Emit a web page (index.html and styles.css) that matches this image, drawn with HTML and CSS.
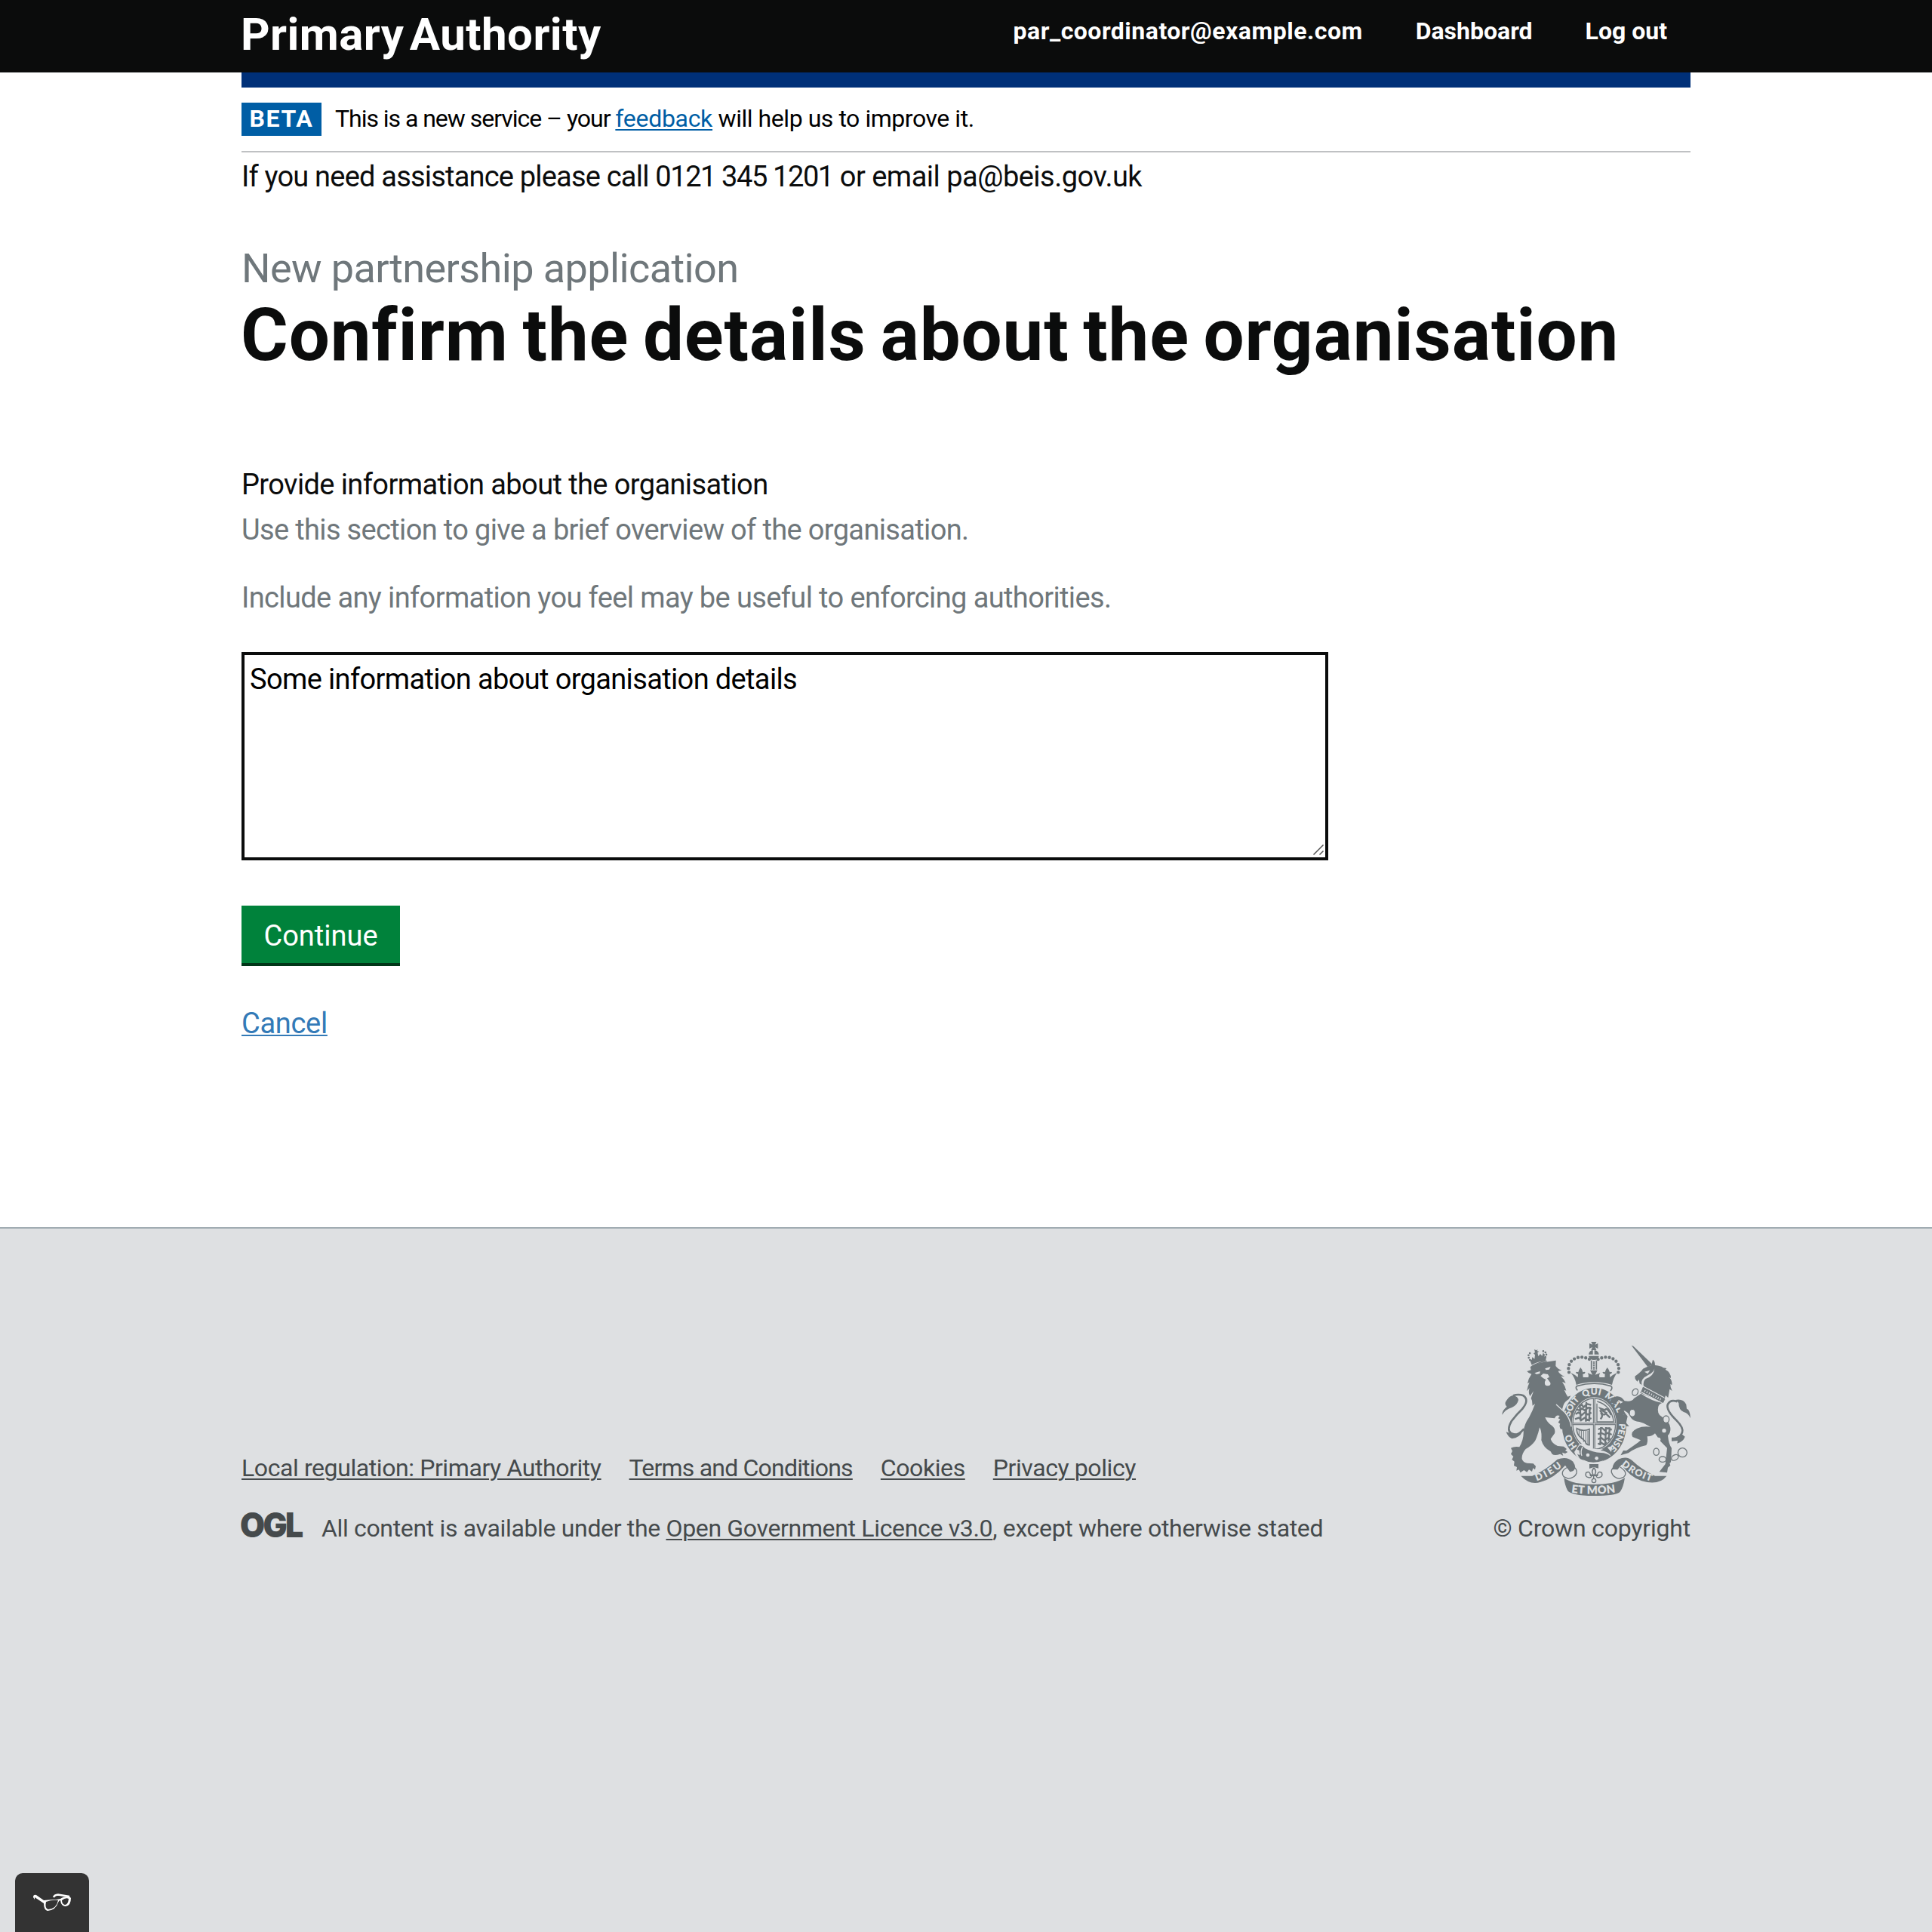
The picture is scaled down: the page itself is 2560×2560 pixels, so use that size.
FILE: index.html
```html
<!DOCTYPE html>
<html lang="en">
<head>
<meta charset="utf-8">
<title>Confirm the details about the organisation</title>
<link rel="stylesheet" href="styles.css">
</head>
<body>
<header class="site-header">
  <div class="wrap site-header-inner">
    <a class="site-name" href="#">Primary Authority</a>
    <nav class="user-nav">
      <a class="user-email" href="#">par_coordinator@example.com</a>
      <a href="#">Dashboard</a>
      <a href="#">Log out</a>
    </nav>
  </div>
</header>
<div class="wrap header-bar"></div>
<main class="wrap main">
  <div class="phase-banner">
    <strong class="phase-tag">BETA</strong>
    <span class="phase-text">This is a new service – your <a href="#">feedback</a><span class="phase-end"> will help us to improve it.</span></span>
  </div>
  <p class="assistance">If you need assistance please call <span class="phone">0121 345 1201</span><span class="email"> or email pa@beis.gov.uk</span></p>
  <p class="caption">New partnership application</p>
  <h1 class="heading">Confirm the details about the organisation</h1>
  <form class="form">
    <label class="label" for="about">Provide information about the organisation</label>
    <p class="hint hint-first">Use this section to give a brief overview of the organisation.</p>
    <p class="hint hint-second">Include any information you feel may be useful to enforcing authorities.</p>
    <div class="field">
      <textarea class="textarea" id="about">Some information about organisation details</textarea>
      <svg class="grip" viewBox="0 0 16 16"><path d="M1.5 14.5 14.5 1.5M9.5 14.5 14.5 9.5" stroke="#555" stroke-width="1.5" fill="none"/></svg>
    </div>
    <button class="button" type="button">Continue</button>
    <a class="cancel" href="#">Cancel</a>
  </form>
</main>
<footer class="footer">
  <div class="wrap footer-inner">
    <div class="footer-meta">
      <nav class="footer-links">
        <a href="#">Local regulation: Primary Authority</a>
        <a class="terms" href="#">Terms and Conditions</a>
        <a href="#">Cookies</a>
        <a href="#">Privacy policy</a>
      </nav>
      <div class="licence">
        <svg class="ogl" viewBox="0 0 82 34"><text y="33.2" x="-2 30 61" transform="scale(.95 1)">OGL</text></svg>
        <span>All content is available under the <a href="#">Open Government Licence v3.0</a>, except where otherwise stated</span>
      </div>
    </div>
    <div class="copyright">
      <svg class="crest" viewBox="90 84 750 612">
        <defs>
          <path id="garter" pathLength="100" d="M457 530A99 118 0 0 1 457 294A99 118 0 0 1 457 530"/>
          <path id="dieu" d="M229 637Q285 618 334 577"/>
          <path id="mon" d="M366 683Q455 695 548 681"/>
          <path id="droit" d="M564 574Q620 622 688 640"/>
        </defs>
        <!-- royal crown -->
        <path d="M445 84h21l-5 11 11-5v21l-11-6 5 12h-21l5-12-12 6V90l12 5z"/>
        <path d="M435 134a20 20 0 0 1 17-17v17zM458 117a20 20 0 0 1 18 17h-18zM435 140h41q-2 16-20 16t-21-16z"/>
        <path d="M357 205C344 160 395 125 446 158M553 205C566 160 517 125 465 158" fill="none" stroke="#6f777b" stroke-width="13" stroke-linecap="round" stroke-dasharray="0 15.5"/>
        <path d="M446 158v36M466 158v36" fill="none" stroke="#6f777b" stroke-width="5"/>
        <path d="M456 162v32" fill="none" stroke="#6f777b" stroke-width="7" stroke-dasharray="5 2"/>
        <path d="M364 207q18 8 28 18l1-13q-8 0-9-7 5-4 10 0 0-8 9-19 9 11 9 19 6-4 10 0-1 8-10 7l1 13 21 0q2-11-3-17l19 7-9-18h29l-9 18 20-7q-6 7-3 17l21 0 1-13q-8 0-10-7 5-4 10 0 1-8 9-19 9 11 10 19 5-4 9 0-1 8-9 7l1 13q10-10 28-18-15 20-20 48-73-22-142 0-4-28-22-48z"/>
        <path d="M391 277q-10-10-3-17 70-21 136 0 8 7-2 19" fill="none" stroke="#6f777b" stroke-width="5"/>
        <!-- garter and shield -->
        <ellipse cx="457" cy="415" rx="128" ry="148"/>
        <ellipse class="cut" cx="457" cy="410" rx="89" ry="106"/>
        <ellipse cx="457" cy="410" rx="85" ry="101" fill="none" stroke="#6f777b" stroke-width="4"/>
        <path d="M457 309v202M371 410h172" stroke="#6f777b" stroke-width="9"/>
        <path class="cutline" d="M457 309v202M371 410h172" stroke-width="2"/>
        <g fill="none" stroke="#6f777b" stroke-width="7">
          <path d="M395 342l13-8 7 10 14-13 16 4M386 352l14 5 8-8 12 8 12-11 14 3M383 371l11-6 14 10 12-10 12 8 14-8M381 391l15-5 10 9 13-9 13 9 14-8M400 333l4 67M426 323l-2 78M440 342l-3 58"/>
          <path d="M473 432l15-6 10 9 14-8 15 7M472 451l13-5 14 7 12-7 16 7M472 471l14-5 11 9 13-8 12 4M472 491l13-6 12 8 10-10M484 423l-3 72M504 423l-3 70M519 424l-5 55"/>
          <path d="M482 391q10-10 5-19 14 4 18-6-14-5-23-17l18 6q5-8 12 0 8 8 13 20M480 356l10 14M505 371l15 14"/>
          <path d="M468 329v73h68M469 321q55 15 66 80" stroke-width="4"/>
          <path d="M388 428q24 14 50 3v63q-12 1-16-13-10-12-24-22-12-14-10-31z" stroke-width="5"/>
          <path d="M397 432v26M406 437v34M415 438v44M424 438v53M432 437v55" stroke-width="3"/>
        </g>
        <text class="motto ring"><textPath href="#garter" startOffset="11" textLength="58">HO</textPath></text>
        <text class="motto ring"><textPath href="#garter" startOffset="29.5" textLength="78">SOIT</textPath></text>
        <text class="motto ring"><textPath href="#garter" startOffset="43.5" textLength="70">QUI</textPath></text>
        <text class="motto ring"><textPath href="#garter" startOffset="56" textLength="84">MAL</textPath></text>
        <text class="motto ring"><textPath href="#garter" startOffset="69.5">Y</textPath></text>
        <text class="motto ring"><textPath href="#garter" startOffset="74.5" textLength="108">PENSE</textPath></text>
        <path class="cut" d="M398 491q18-5 30 7 46 25 91 2l10 4-8 34q-60 51-112 15-24-8-31-31z"/>
        <path d="M400 496q12 0 20 11 32 17 64 18 22 0 39 14-8 7-27 16-47 17-79-1-13 0-20-10l-8-16q5 7 13 4-5-7-4-16l-9-4q4-11 11-16z"/>
        <path d="M482 516l26-14 20 24-6 8q-16-17-40-18z"/>
        <path class="cutline" d="M411 501q-10 20-3 36" stroke-width="4"/>
        <circle class="cut" cx="432" cy="534" r="7"/><circle class="cut" cx="467" cy="547" r="7"/>
        <!-- lion -->
        <path d="M202 156q-14-20 4-30M263 144q12-17-12-24" fill="none" stroke="#6f777b" stroke-width="8" stroke-linecap="round" stroke-dasharray="0 10"/>
        <path d="M219 114l8 4 5-4-1 7 7 1-6 5 3 14 8-9 7 8 4-12 7 6-2 10 8-1-3 17q-32 2-55 16l-9-24 9 4 2-11 9 7 2-16-6-6 6-4z"/>
        <path d="M207 183q25-18 62-23" fill="none" stroke="#6f777b" stroke-width="4"/>
        <path d="M190 201L206 196L203 184Q235 165 275 163L305 158L304 180Q312 192 328 197L314 200Q318 212 340 222L325 221Q338 232 344 248L330 243Q342 260 346 278L338 275Q345 292 352 302L364 298L356 312Q340 322 335 335L330 352Q352 378 362 410L368 438L360 430L354 442L346 432L338 440L332 430L325 432Q316 420 322 410L314 404L322 392L314 388L320 378Q306 372 300 388L262 384Q270 405 288 416Q305 428 300 448L284 470Q290 488 312 498L336 500L348 510L342 516L352 522L342 528L330 524L334 537L322 530Q300 538 290 530L284 520Q255 505 247 475Q250 440 240 424Q236 445 228 465Q220 490 185 510Q168 530 170 550Q175 565 190 566L215 568L225 578L222 592L214 586L210 600L198 592L190 602L178 594L164 604L158 592L148 596L150 582L138 576L140 560L130 552L136 540L126 530L132 518L126 506Q140 498 160 502Q178 470 176 440Q180 410 198 385Q214 355 222 330L212 338L210 318L206 308L216 280L202 300Q194 288 200 268L190 280Q192 260 200 245L192 250Q196 228 208 212Q196 210 190 201Z"/>
        <path class="cut" d="M220 208l22-7-1 9-13 3zM262 190l22-7-6 11-13 2zM244 220l11-10 18 3 6 11-9 5 13 18q3 12-11 12t-11-16l4-9-10-5z"/>
        <path class="cutline" d="M306 333l36 33q19 24 24 55" stroke-width="4"/>
        <path d="M178 430Q150 462 128 449Q108 435 128 400Q150 370 172 350Q200 315 176 298Q155 290 135 298" fill="none" stroke="#6f777b" stroke-width="8"/>
        <path d="M91 374Q92 355 110 342Q98 330 108 318Q118 300 135 297Q155 302 156 315Q152 335 130 345Q105 352 91 374ZM107 442q12 6 25 3 18 9 38-2-8 20-40 26-16-7-23-27z"/>
        <!-- unicorn -->
        <path d="M605 98l8 3 76 73-19 10z"/>
        <path d="M619 221q26-19 32-30 20-10 34-15l5-21q9 4 9 22 25 2 32 10l14 2-5 5q22 11 22 34l-6-3q13 16 10 31l-6-5q-1 13 7 28l-10-7-6 34-10-9-9 29-92-39 14-27-16-10-3-16-7 8-8-11z"/>
        <path class="cut" d="M657 203l22-6-9 14zM697 190q-2 30-35 41-12 10-8 30l-8-5q-7-25 27-41 20-9 24-25z"/>
        <path class="cutline" d="M652 261l84 45M644 284l82 42" stroke-width="4"/>
        <path class="cutline" d="M657 279l68 36" stroke-width="9" stroke-dasharray="3 7"/>
        <path d="M652 264l-5 17 83 44 8-13" fill="none" stroke="#6f777b" stroke-width="3"/>
        <path d="M643 290q40 28 84 37-11 3-15 14-7 29 14 41 30 17 34 44 2 18-10 31 4 37 15 49l-2 43q1 16-6 17l3 9-10 9-3 20-31-3 24-31 7-64-25-25-23-33q-13 13-31 12 4 23-4 35-42 9-71 31l-31 9 11-19 12 1q25-17 47-33l10-9-32-13q-12-20 18-34 23-10 53-6-22-15-44-20-22-2-33-15-14-29-32-31l18 24-6 26 12 14-12-1-10-20-5 7q-17-10-19-23l10-11 15 1-23-38 20-12-18-8-13 18-23-10 9-17 19-5q18-3 32 18 29 5 37-10z"/>
        <path d="M767 472q32-4 40-28 6-19-22-47-42-41-36-63 11-23 38-12" fill="none" stroke="#6f777b" stroke-width="8"/>
        <path d="M780 315q31-6 43 18l2 17q13 2 15 38-9-21-27-25-20-8-20-36zM765 464q20 3 40-13l13 10q-7 20-31 27l2-11-24 2z"/>
        <g class="chain">
          <ellipse cx="620" cy="284" rx="11" ry="14" transform="rotate(25 620 284)"/><ellipse cx="609" cy="367" rx="12" ry="15"/>
          <ellipse cx="743" cy="392" rx="12" ry="14"/><ellipse cx="704" cy="521" rx="11" ry="14"/><ellipse cx="729" cy="551" rx="14" ry="11"/><ellipse cx="778" cy="544" rx="15" ry="10" transform="rotate(-30 778 544)"/><circle cx="808" cy="524" r="18"/>
        </g>
        <circle class="cut" cx="735" cy="437" r="8"/><circle class="cut" cx="713" cy="472" r="8"/><circle class="cut" cx="601" cy="309" r="7"/>
        <!-- ribbon -->
        <path d="M166 617h45q52-22 100-66 38-14 62 9 22 34-12 41l-19-26q-44 51-98 66-42 14-78-24zM745 617h-46q-54-25-91-61-20-20-55-5-26 18-23 40l20 1 16-20q32 48 80 65 69 20 99-20z"/>
        <path d="M353 574q39 8 34 32-5 18-33 22l-18-8q-16-23 17-38M560 575q-38 6-34 28 8 22 31 25l17-6q20-18-13-40" fill="none" stroke="#6f777b" stroke-width="4"/>
        <path d="M337 624q13 12 48 21 70 12 141 0 39-9 53-21-6 40-19 56-14 16-106 16-90-1-103-22-11-21-14-50z"/>
        <path d="M438 570h36v17q-6-2-18-5-10 3-18 6z"/>
        <path d="M456 584q-12 14-2 30l-12-2q-3-16-17-8-6 17 10 19 8 3 12-5M456 584q13 14 2 30l12-2q3-16 17-8 6 17-10 19-8 3-12-5M455 614v15M440 616h32" fill="none" stroke="#6f777b" stroke-width="4.5"/>
        <circle cx="456" cy="636" r="8" fill="none" stroke="#6f777b" stroke-width="4"/>
        <text class="motto"><textPath href="#dieu" textLength="116">DIEU</textPath></text>
        <text class="motto mon"><textPath href="#mon" textLength="176">ET MON</textPath></text>
        <text class="motto"><textPath href="#droit" textLength="136">DROIT</textPath></text>
      </svg>
      <span>© Crown copyright</span>
    </div>
  </div>
</footer>
<div class="glasses-tab">
  <svg class="glasses" viewBox="0 0 50 24">
    <path d="M0 5Q0 1 4 2L14 9Q24 8 31 8L36 7Q39 4 48 4L50 6Q50 16 43 17Q37 17 36 9Q34 9 33 12Q30 22 19 23Q14 22 14 13L2 5L2 8Z"/>
    <path d="M17 11Q25 8 33 9Q31 20 20 21Q15 20 17 11ZM38 9Q43 5 47 7Q46 15 42 15Q38 14 38 9Z" fill="#333"/>
    <path d="M27 5Q28 2 33 1.5L48 4" fill="none" stroke="#fff" stroke-width="2.4"/>
  </svg>
</div>
</body>
</html>
```
FILE: styles.css
```css
* { box-sizing: border-box; }

body {
  margin: 0;
  min-height: 2560px;
  display: flex;
  flex-direction: column;
  background: #fff;
  color: #0b0c0c;
  font-family: Roboto, "Noto Sans", sans-serif;
  font-size: 38px;
  line-height: 50px;
}

p, h1 { margin: 0; }

a {
  text-decoration-thickness: 2px;
  text-underline-offset: 3px;
}

.wrap {
  width: 1920px;
  margin: 0 auto;
}

/* Header */
.site-header {
  height: 96px;
  background: #0b0c0c;
}

.site-header-inner {
  display: flex;
  justify-content: space-between;
  align-items: flex-start;
  padding-right: 31px;
}

.site-header a {
  color: #fff;
  font-weight: 700;
  text-decoration: none;
  white-space: nowrap;
}

.site-name {
  margin: 16px 0 0 -1px;
  font-size: 60px;
  line-height: 59px;
  letter-spacing: 0.1px;
  word-spacing: -8px;
}

.site-name { letter-spacing: 0.45px; }

.user-nav {
  display: flex;
  gap: 70px;
  margin-top: 21px;
  font-size: 32px;
  line-height: 40px;
}

.user-email { letter-spacing: 0.5px; }

.header-bar {
  height: 20px;
  background: #003078;
}

/* Phase banner */
.phase-banner {
  display: flex;
  gap: 18px;
  height: 86px;
  padding-top: 20px;
  border-bottom: 2px solid #bfc1c3;
  font-size: 32px;
  line-height: 42px;
}

.phase-tag {
  width: 106px;
  height: 44px;
  background: #005ea5;
  color: #fff;
  font-weight: 700;
  text-align: center;
  letter-spacing: 1.6px;
}

.phase-text {
  color: #000;
  letter-spacing: -1.03px;
}

.phase-text a {
  color: #005ea5;
  letter-spacing: -0.3px;
}

.phase-end { letter-spacing: -0.45px; }

/* Content */
.assistance {
  padding-top: 7px;
  letter-spacing: -0.8px;
}

.phone { letter-spacing: -1.4px; }

.email { letter-spacing: -0.5px; }

.caption {
  margin-top: 67px;
  color: #6f777b;
  font-size: 54px;
  line-height: 59px;
  letter-spacing: -0.6px;
}

.heading {
  margin: 9px 0 0 -1px;
  font-size: 96px;
  line-height: 100px;
  letter-spacing: 0.85px;
  word-spacing: -6px;
  white-space: nowrap;
}

.form {
  display: flex;
  flex-direction: column;
  align-items: flex-start;
  margin-top: 123px;
}

.label { letter-spacing: -0.6px; }

.hint {
  color: #6f777b;
  letter-spacing: -0.62px;
}

.hint-first {
  margin-top: 10px;
  letter-spacing: -0.65px;
}

.hint-second { margin-top: 40px; }

.field {
  position: relative;
  width: 1440px;
  height: 276px;
  margin-top: 47px;
}

.textarea {
  display: block;
  width: 100%;
  height: 100%;
  padding: 7px 7px;
  border: 4px solid #0b0c0c;
  border-radius: 0;
  background: #fff;
  color: #000;
  font: inherit;
  letter-spacing: -0.64px;
  resize: none;
  outline: none;
}

.grip {
  position: absolute;
  right: 5px;
  bottom: 6px;
  width: 16px;
  height: 16px;
}

.button {
  width: 210px;
  height: 80px;
  margin-top: 60px;
  padding: 15px 0 11px;
  border: 0;
  border-bottom: 4px solid #003618;
  background: #00823b;
  color: #fff;
  font: inherit;
}

.cancel {
  margin-top: 51px;
  color: #337ab7;
  letter-spacing: -0.3px;
  text-underline-offset: 2px;
}

/* Footer */
.footer {
  flex: 1;
  margin-top: 245px;
  border-top: 2px solid #a1acb2;
  background: #dee0e2;
  color: #454a4c;
  font-size: 32px;
  line-height: 40px;
}

.footer a { color: inherit; }

.footer-inner {
  display: flex;
  justify-content: space-between;
  align-items: flex-end;
  padding-top: 150px;
}

.footer-meta {
  display: flex;
  flex-direction: column;
  gap: 40px;
  letter-spacing: -0.34px;
}

.footer-links {
  display: flex;
  gap: 37px;
  letter-spacing: -0.41px;
}

.footer-links .terms { letter-spacing: -0.8px; }

.licence {
  display: flex;
  align-items: flex-start;
  gap: 24px;
  white-space: nowrap;
}

.ogl {
  width: 82px;
  height: 34px;
  margin-top: -1px;
  overflow: visible;
  fill: #454a4c;
  font: 900 45px Inter, sans-serif;
  letter-spacing: 0;
}

.copyright {
  display: flex;
  flex-direction: column;
  align-items: flex-end;
  gap: 23px;
  letter-spacing: -0.2px;
}

.crest {
  width: 250px;
  height: 204px;
  fill: #6f777b;
  letter-spacing: 0;
}

.crest .cut { fill: #dee0e2; }

.crest .cutline {
  fill: none;
  stroke: #dee0e2;
}

.crest .chain {
  fill: #dee0e2;
  stroke: #6f777b;
  stroke-width: 4;
}

.crest .motto {
  fill: #dee0e2;
  font: 800 38px Lato, sans-serif;
}

.crest .ring { font-size: 36px; }

.crest .mon { font-size: 44px; }

/* Accessibility toggle pinned to the window edge */
.glasses-tab {
  position: fixed;
  left: 20px;
  bottom: 0;
  display: flex;
  justify-content: center;
  width: 98px;
  height: 78px;
  padding-top: 27px;
  border-radius: 10px 10px 0 0;
  background: #333;
}

.glasses {
  width: 50px;
  height: 24px;
  fill: #fff;
}
```
